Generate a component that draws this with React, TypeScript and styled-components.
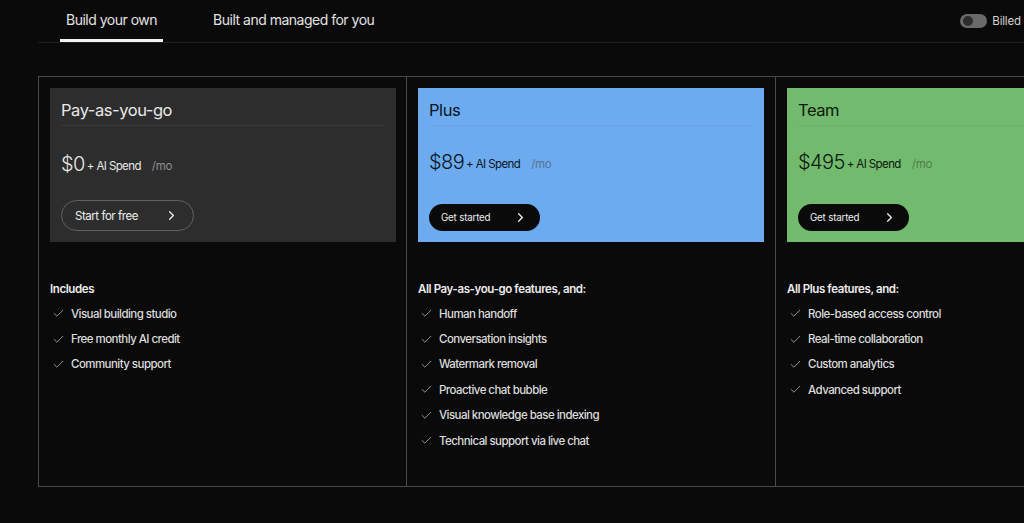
import styled, { createGlobalStyle } from 'styled-components'
import { Check, ChevronRight } from 'lucide-react'

const GlobalStyle = createGlobalStyle`
  html, body {
    margin: 0;
    padding: 0;
    background: #0a0a0a;
    overflow: hidden;
  }
  * { box-sizing: border-box; }
`

const Page = styled.div`
  width: 1024px;
  height: 523px;
  overflow: hidden;
  background: #0a0a0a;
  padding-left: 38px;
  font-family: Inter, "Liberation Sans", sans-serif;
  color: #eeeeee;
`

const Inner = styled.div`
  width: 1108px;
`

const TabBar = styled.div`
  display: flex;
  align-items: stretch;
  height: 43px;
  padding-left: 22px;
  border-bottom: 1px solid #1f1f1f;
`

const Tab = styled.div<{ $active?: boolean }>`
  flex: none;
  height: 42px;
  padding: 0 6px 1px;
  margin-right: 44px;
  display: flex;
  align-items: center;
  white-space: nowrap;
  font-size: 14px;
  letter-spacing: -0.5px;
  color: #e2e2e2;
  border-bottom: 3px solid ${p => (p.$active ? '#f2f2f2' : 'transparent')};
`

const Billing = styled.div`
  flex: none;
  margin-left: 536px;
  height: 42px;
  display: flex;
  align-items: center;
  gap: 5px;
  font-size: 11.5px;
  letter-spacing: -0.2px;
  color: #d0d0d0;
  white-space: nowrap;
`

const Toggle = styled.div`
  width: 27px;
  height: 14px;
  border-radius: 7px;
  background: #6a6a6a;
  padding: 2px 3px;
  &::before {
    content: '';
    display: block;
    width: 10px;
    height: 10px;
    border-radius: 50%;
    background: #2d2d2d;
  }
`

const Plans = styled.div`
  margin-top: 33px;
  height: 411px;
  display: grid;
  grid-template-columns: 368px 369px 370px;
  border-top: 1px solid #4a4a4a;
  border-bottom: 1px solid #4a4a4a;
  border-left: 1px solid #4a4a4a;
`

const Column = styled.div`
  padding: 11px 0 0 11px;
  border-right: 1px solid #4a4a4a;
`

const Card = styled.div<{ $bg: string; $fg: string }>`
  width: 346px;
  height: 154px;
  background: ${p => p.$bg};
  color: ${p => p.$fg};
  padding: 11px 11px 11px;
  display: flex;
  flex-direction: column;
  align-items: flex-start;
`

const PlanName = styled.div<{ $rule: string }>`
  align-self: stretch;
  height: 27px;
  font-size: 16.5px;
  line-height: 22px;
  letter-spacing: -0.45px;
  border-bottom: 1px solid ${p => p.$rule};
`

const Price = styled.div<{ $low?: boolean }>`
  margin-top: ${p => (p.$low ? 24 : 22)}px;
  display: flex;
  align-items: flex-end;
  white-space: nowrap;
`

const Amount = styled.span`
  font-size: 20px;
  line-height: 28px;
  font-weight: 350;
  letter-spacing: -0.6px;
`

const Spend = styled.span`
  margin-left: 2px;
  font-size: 11.5px;
  line-height: 24px;
  letter-spacing: -0.6px;
`

const Period = styled.span<{ $color: string }>`
  margin-left: 11px;
  font-size: 11.5px;
  line-height: 24px;
  letter-spacing: -0.3px;
  color: ${p => p.$color};
`

const OutlineButton = styled.div`
  margin-top: auto;
  width: 133px;
  height: 31px;
  border: 1px solid #606060;
  border-radius: 16px;
  padding: 0 14px 0 13px;
  display: flex;
  align-items: center;
  justify-content: space-between;
  font-size: 11.5px;
  letter-spacing: -0.45px;
  color: #eeeeee;
`

const SolidButton = styled.div`
  margin-top: auto;
  width: 111px;
  height: 27px;
  background: #0a0a0a;
  border-radius: 14px;
  padding: 0 12px 0 12px;
  display: flex;
  align-items: center;
  justify-content: space-between;
  font-size: 9.8px;
  letter-spacing: -0.2px;
  color: #eeeeee;
`

const Features = styled.div`
  margin-top: 39px;
`

const FeatureTitle = styled.div`
  height: 16px;
  font-size: 11.5px;
  line-height: 16px;
  font-weight: 600;
  letter-spacing: -0.4px;
  color: #ececec;
  margin-bottom: 4px;
`

const FeatureRow = styled.div`
  height: 25.4px;
  display: flex;
  align-items: center;
  gap: 6px;
  padding-left: 2px;
  font-size: 11.5px;
  font-weight: 500;
  letter-spacing: -0.55px;
  color: #dcdcdc;
  white-space: nowrap;
  svg { color: #b0b0b0; flex: none; }
`

const plans = [
  {
    name: 'Pay-as-you-go',
    bg: '#2d2d2d',
    fg: '#e8e8e8',
    rule: '#383838',
    periodColor: '#8f8f8f',
    amount: '$0',
    cta: 'Start for free',
    outline: true,
    title: 'Includes',
    features: ['Visual building studio', 'Free monthly AI credit', 'Community support'],
  },
  {
    name: 'Plus',
    bg: '#6cabf0',
    fg: '#0b1420',
    rule: '#66a2e4',
    periodColor: '#58728f',
    amount: '$89',
    cta: 'Get started',
    outline: false,
    title: 'All Pay-as-you-go features, and:',
    features: [
      'Human handoff',
      'Conversation insights',
      'Watermark removal',
      'Proactive chat bubble',
      'Visual knowledge base indexing',
      'Technical support via live chat',
    ],
  },
  {
    name: 'Team',
    bg: '#72bb6e',
    fg: '#0b170b',
    rule: '#6cb168',
    periodColor: '#4f7f4c',
    amount: '$495',
    cta: 'Get started',
    outline: false,
    title: 'All Plus features, and:',
    features: ['Role-based access control', 'Real-time collaboration', 'Custom analytics', 'Advanced support'],
  },
]

function App() {
  return (
    <>
      <GlobalStyle />
      <Page>
        <Inner>
          <TabBar>
            <Tab $active>Build your own</Tab>
            <Tab>Built and managed for you</Tab>
            <Billing>
              <Toggle />
              Billed annually
            </Billing>
          </TabBar>
          <Plans>
            {plans.map(plan => (
              <Column key={plan.name}>
                <Card $bg={plan.bg} $fg={plan.fg}>
                  <PlanName $rule={plan.rule}>{plan.name}</PlanName>
                  <Price $low={plan.outline}>
                    <Amount>{plan.amount}</Amount>
                    <Spend>+ AI Spend</Spend>
                    <Period $color={plan.periodColor}>/mo</Period>
                  </Price>
                  {plan.outline ? (
                    <OutlineButton>
                      {plan.cta}
                      <ChevronRight size={15} strokeWidth={2} />
                    </OutlineButton>
                  ) : (
                    <SolidButton>
                      {plan.cta}
                      <ChevronRight size={15} strokeWidth={2} />
                    </SolidButton>
                  )}
                </Card>
                <Features>
                  <FeatureTitle>{plan.title}</FeatureTitle>
                  {plan.features.map(f => (
                    <FeatureRow key={f}>
                      <Check size={13} strokeWidth={1.5} />
                      {f}
                    </FeatureRow>
                  ))}
                </Features>
              </Column>
            ))}
          </Plans>
        </Inner>
      </Page>
    </>
  )
}

export default App
